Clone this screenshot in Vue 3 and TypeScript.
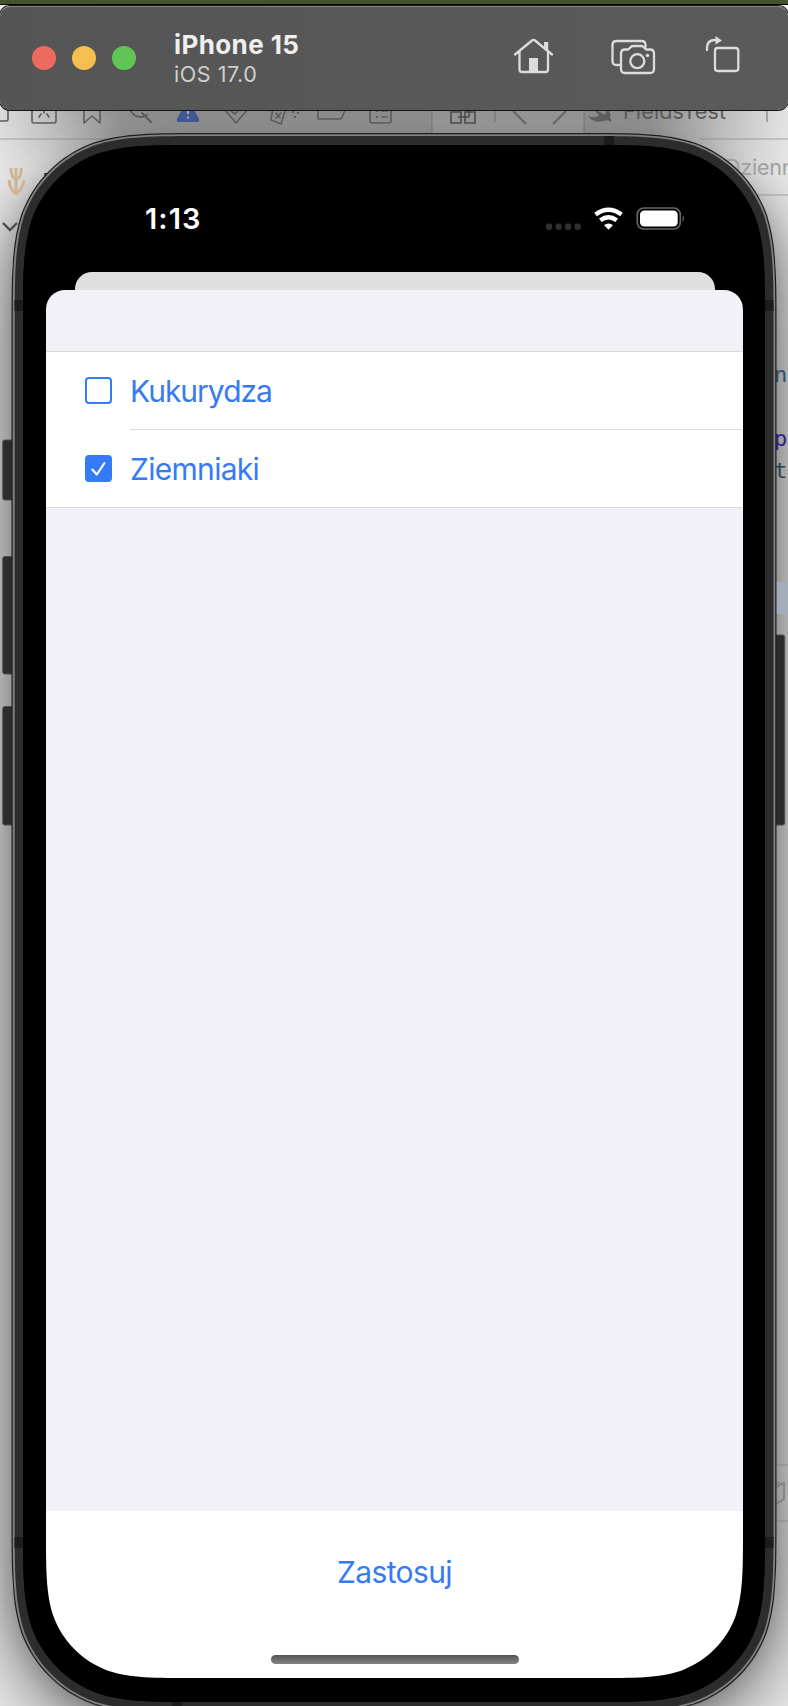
<script setup lang="ts">
import { ref } from 'vue'

interface Crop {
  id: number
  name: string
  checked: boolean
}

const crops = ref<Crop[]>([
  { id: 1, name: 'Kukurydza', checked: false },
  { id: 2, name: 'Ziemniaki', checked: true },
])

// Rounded rectangle with continuous-curvature corners.
function smoothRect(x: number, y: number, w: number, h: number, r: number): string {
  const k: [number, number][] = [
    [1.52866, 0], [1.08849, 0], [0.86841, 0], [0.63149, 0.07491],
    [0.37282, 0.16906], [0.16906, 0.37282], [0.07491, 0.63149],
    [0, 0.86841], [0, 1.08849], [0, 1.52866],
  ]
  const corner = (cx: number, cy: number, sx: number, sy: number, reverse: boolean) => {
    const pts = (reverse ? [...k].reverse() : k).map(
      ([a, b]) => `${(cx + sx * a * r).toFixed(2)} ${(cy + sy * b * r).toFixed(2)}`,
    )
    return `${pts[0]}C${pts.slice(1).join(' ')}`
  }
  return (
    'M' + corner(x + w, y, -1, 1, false) +
    'L' + corner(x + w, y + h, -1, -1, true) +
    'L' + corner(x, y + h, 1, -1, false) +
    'L' + corner(x, y, 1, 1, true) + 'Z'
  )
}

const outer = smoothRect(11.5, 133, 765, 1581, 129)
const rim = smoothRect(12.7, 134.2, 762.6, 1578.6, 128)
const frame = smoothRect(14.7, 136, 758.8, 1575, 126)
const bezel = smoothRect(23, 145, 742, 1557, 118)
const glass = smoothRect(46, 168, 697, 1510, 98)
</script>

<template>
  <main class="scene">
    <div class="glow"></div>
    <div class="toolbar-shade"></div>
    <svg class="layer" viewBox="0 0 788 1706" width="788" height="1706" aria-hidden="true">
      <g class="lines">
        <path d="M0 139H120M700 139H788M735 195H788M770 1465H788M770 1521H788" />
      </g>
      <path d="M432 108h152v26h-152z" fill="#fff" fill-opacity=".07" />
      <path d="M432 108V134M584 108V134" stroke="#555" stroke-opacity=".3" stroke-width="1.3" />
      <g fill="none" stroke="#5c5c5c" stroke-width="1.6" stroke-linecap="round" stroke-linejoin="round">
        <path d="M0 121h6q2 0 2-2V106M32 106v15q0 2 2 2h20q2 0 2-2v-15M44 106v7M39 117l2-3M49 117l-2-3" />
        <path d="M84 106v17l8-7 8 7v-17" />
        <path d="M129 107q4 11 13 10l5-2M142 113l9 9" stroke-width="2" />
        <path d="M224 109l12 14 12-14M231 111l4 3 7-7" />
        <path d="M273 107l-2 13 10 4 5-16M276 113l4 5M281 113l-5 5" />
        <path d="M318 106v13h22q2 0 3-4l2-5M370 106v15q0 2 2 2h17q2 0 2-2v-15M382 111h5M382 117h5" />
      </g>
      <path d="M292 112h2M297 113h2M294 117h2M376 111h2M376 117h2" stroke="#5c5c5c" stroke-width="2" />
      <path d="M177 119L184 106H192L199 119Q200 122 197 122H179Q176 122 177 119Z" fill="#3e5893" />
      <path d="M188 109v5M188 116.5v2" stroke="#aaa" stroke-width="2.2" />
      <path d="M451 112h10v11h-10zM465 112h10v11h-10zM458 117h11M469 117v-7" fill="none" stroke="#4b4b4b" stroke-width="1.6" />
      <path d="M495 109v13M767 109v13" stroke="#6c6c6c" />
      <path d="M513 111l13 13M566 111l-13 13" stroke="#666" stroke-width="2" />
      <path d="M588 116q7 3 11-1l-8-8 14 8q2-4 1-8 6 5 4 11 2 2 1 4-3-3-7-1-10 3-16-5Z" fill="#5d5d5d" />
      <text x="623" y="118.5" class="ide" font-size="21.5" fill="#5a5a5a" textLength="103">FieldsTest</text>
      <text x="725" y="175" class="ide" font-size="21.5" fill="#a0a0a0" textLength="86">Dziennik</text>
      <g fill="none" stroke="#cfb596" stroke-width="3">
        <path d="M16 195V168M11 168q0 9 4 11M21 168q1 9-4 11M9 180q1 9 6 13M24 180q-1 9-7 13" />
      </g>
      <text x="43" y="187" class="ide" font-size="19" font-weight="700" fill="#333">F</text>
      <path d="M3 223l7 7 7-7" fill="none" stroke="#4b4b4b" stroke-width="2.4" />
      <g class="code">
        <text x="774" y="382" fill="#2b4f6d">n</text>
        <text x="774" y="446" fill="#35208a">p</text>
        <text x="774" y="478" fill="#2b474b">t</text>
      </g>
      <path d="M776 582h12v32h-12z" fill="#a4acba" />
      <path d="M776 1487l8-4v16l-8 5M774 1485l6-3" fill="none" stroke="#808080" stroke-width="1.7" />

      <g fill="#2c2c2c" stroke="#4d4d4d" stroke-width="1">
        <rect x="2.8" y="440" width="13" height="60" rx="2" />
        <rect x="2.8" y="556.5" width="13" height="117.5" rx="2" />
        <rect x="2.8" y="706.5" width="13" height="118.5" rx="2" />
        <rect x="772" y="635" width="12.7" height="190" rx="2" />
      </g>
      <path :d="outer" fill="#1d1d1d" />
      <path :d="rim" fill="#808080" />
      <path :d="frame" fill="#2c2c2c" />
      <path d="M604 136h10v9h-10zM14.5 300h9v11h-9zM765 300h8.5v11h-8.5zM14.5 1537h9v11h-9zM765 1537h8.5v11h-8.5zM172 1701h10v6h-10z" fill="#1c1c1c" />
      <path :d="bezel" fill="#000" />
    </svg>

    <header class="toolbar">
      <div class="lights"><i class="red"></i><i class="amber"></i><i class="green"></i></div>
      <div class="device">
        <strong>iPhone 15</strong>
        <span>iOS 17.0</span>
      </div>
      <svg class="tools" viewBox="510 30 232 50" width="232" height="50" aria-hidden="true">
        <g fill="none" stroke="#dcdcdc" stroke-width="2.3" stroke-linecap="round" stroke-linejoin="round">
          <path d="M515 54.5l17-14q1.5-1.2 3 0l17 14M519.5 52v17.5q0 2.5 2.5 2.5h23.5q2.5 0 2.5-2.5V52" />
          <path d="M619 65h-2.500q-4 0-4-4V45q0-4 4-4h25q4 0 4 4v2" />
          <path d="M625 49.500h3.200l2.800-2.700q.8-.8 2-.8h8.200q1.200 0 2 .8l2.800 2.700h4q4 0 4 4v15.500q0 4-4 4h-25q-4 0-4-4V53.500q0-4 4-4z" />
          <circle cx="637.3" cy="61.2" r="7" />
          <rect x="715" y="48" width="23.3" height="23" rx="2.7" />
          <path d="M707 50v-2q0-8 8-8h2" />
        </g>
        <path d="M529 58h9v14h-9zM544 42h4.200v9l-4.200-3.500zM715.500 36l6.500 4.500-6.500 4z" fill="#dcdcdc" />
        <circle cx="647.5" cy="55.5" r="1.8" fill="#dcdcdc" />
      </svg>
    </header>

    <section class="screen">
      <div class="status">
        <time>1:13</time>
        <svg viewBox="540 200 150 34" width="150" height="34" aria-hidden="true">
          <g fill="#303030">
            <rect v-for="n in 4" :key="n" :x="536.5 + n * 9.5" y="223.5" width="6.2" height="6.4" rx="2.4" />
          </g>
          <g fill="none" stroke="#fff" stroke-width="4.4">
            <path d="M595.500 214.500q13-9.500 26 0" />
            <path d="M600.300 220.300q8.200-6 16.400 0" />
          </g>
          <path d="M604 225q4.500-3 9 0l-4.500 4.800z" fill="#fff" />
          <rect x="637.3" y="208" width="43" height="21" rx="6.5" fill="none" stroke="#666" stroke-width="1.7" />
          <rect x="640" y="210.6" width="37.7" height="16" rx="4.2" fill="#fff" />
          <path d="M682.700 215.500q2.500 3 0 6.500z" fill="#777" />
        </svg>
      </div>
      <div class="back-sheet"></div>
      <div class="sheet">
        <div class="list">
          <label v-for="crop in crops" :key="crop.id" class="row">
            <input v-model="crop.checked" type="checkbox" />
            <span class="box" :class="{ on: crop.checked }">
              <svg v-if="crop.checked" viewBox="0 0 27 27" width="27" height="27">
                <path d="M7.300 14.500l4.500 5L19.500 8" fill="none" stroke="#fff" stroke-width="2.1" stroke-linecap="round" stroke-linejoin="round" />
              </svg>
            </span>
            <span class="name">{{ crop.name }}</span>
          </label>
        </div>
        <footer class="footer">
          <button type="button">Zastosuj</button>
          <div class="home"></div>
        </footer>
      </div>
    </section>

    <svg class="layer" viewBox="0 0 788 1706" width="788" height="1706" aria-hidden="true">
      <path :d="bezel + glass" fill="#000" fill-rule="evenodd" />
    </svg>
  </main>
</template>

<style>
body {
  margin: 0;
}
</style>

<style scoped>
.scene {
  position: relative;
  box-sizing: border-box;
  width: 788px;
  height: 1706px;
  padding-top: 6px;
  overflow: hidden;
  background: #ececec;
  font-family: Inter, "Liberation Sans", sans-serif;
}
.glow {
  position: absolute;
  left: 12px;
  top: 134px;
  width: 764px;
  height: 1579px;
  border-radius: 140px;
  box-shadow: 0 24px 80px rgba(0, 0, 0, 0.6), 0 6px 30px rgba(0, 0, 0, 0.18);
}
.toolbar-shade {
  position: absolute;
  left: 0;
  right: 0;
  top: 108px;
  height: 64px;
  background: linear-gradient(rgba(0, 0, 0, 0.38), rgba(0, 0, 0, 0.28) 40%, transparent);
  mask-image: linear-gradient(90deg, rgba(0, 0, 0, 0.2), #000 120px, #000 650px, rgba(0, 0, 0, 0.1));
}
.layer {
  position: absolute;
  left: 0;
  top: 0;
  pointer-events: none;
}
.lines {
  fill: none;
  stroke: #777;
  stroke-opacity: 0.4;
  stroke-width: 1.5;
}
.ide {
  font-family: Inter, sans-serif;
}
.code {
  font: 22px "DejaVu Sans Mono", monospace;
}
.toolbar {
  position: relative;
  box-sizing: border-box;
  display: flex;
  height: 104px;
  padding-left: 32px;
  border-radius: 10px;
  background: linear-gradient(90deg, #555, #5a5a5a);
  border-top: 1px solid #858585;
  box-shadow: 0 0 0 1px #151515;
}
.toolbar::before {
  content: "";
  position: absolute;
  left: 0;
  right: 0;
  top: -7px;
  height: 4px;
  background: #445329;
  border-bottom: 1px solid #080808;
}
.lights {
  display: flex;
  gap: 16px;
  padding-top: 39px;
}
.lights i {
  width: 24px;
  height: 24px;
  border-radius: 50%;
}
.red { background: #ed6a5f; }
.amber { background: #f5bf4f; }
.green { background: #61c555; }
.device {
  display: flex;
  flex-direction: column;
  margin-left: 38px;
  padding-top: 22px;
  width: 150px;
  white-space: nowrap;
}
.device strong {
  color: #efefef;
  font-size: 26px;
  line-height: 32px;
  letter-spacing: 0.4px;
}
.device span {
  color: #cfcfcf;
  font-size: 21.5px;
  line-height: 26px;
  letter-spacing: 0.55px;
}
.tools {
  margin: 23px 46px 0 auto;
}
.screen {
  position: relative;
  display: flex;
  flex-direction: column;
  width: 697px;
  height: 1510px;
  margin: 58px 0 0 46px;
}
.status {
  display: flex;
  justify-content: space-between;
  box-sizing: border-box;
  height: 104px;
  padding: 32px 53px 0 99px;
}
.status time {
  color: #fff;
  font-size: 29px;
  font-weight: 600;
  line-height: 38px;
  letter-spacing: 1.1px;
}
.back-sheet {
  height: 17.5px;
  margin: 0 28.5px 0 29px;
  border-radius: 17px 17px 0 0;
  background: #dfdfdf;
}
.sheet {
  display: flex;
  flex: 1;
  flex-direction: column;
  justify-content: space-between;
  padding-top: 61.5px;
  border-radius: 19px 19px 85px 85px;
  background: #f2f1f7;
}
.list {
  background: #fff;
  border-top: 1px solid #d9d9dc;
  border-bottom: 1px solid #d9d9dc;
}
.row {
  position: relative;
  display: flex;
  align-items: center;
  height: 77px;
  padding-left: 39px;
}
.row + .row {
  height: 78px;
}
.row + .row::before {
  content: "";
  position: absolute;
  top: 0;
  left: 84px;
  right: 0;
  height: 1px;
  background: #dedee0;
}
.row input {
  position: absolute;
  opacity: 0;
}
.box {
  box-sizing: border-box;
  width: 27px;
  height: 27px;
  border: 2px solid #357af6;
  border-radius: 4px;
}
.box.on {
  border: 0;
  background: #357af6;
}
.box svg {
  display: block;
}
.name {
  margin-left: 18px;
  color: #357af6;
  font-size: 30px;
  line-height: 36px;
  letter-spacing: -1px;
}
.row + .row .name {
  padding-top: 1px;
  letter-spacing: -0.7px;
}
.footer {
  display: flex;
  flex-direction: column;
  align-items: center;
  justify-content: space-between;
  box-sizing: border-box;
  height: 167px;
  padding: 41px 0 14px;
  border-radius: 0 0 85px 85px;
  background: #fff;
}
.footer button {
  padding: 0;
  border: 0;
  background: none;
  color: #357af6;
  font: 30px/40px Inter, sans-serif;
  letter-spacing: -0.6px;
}
.home {
  width: 248px;
  height: 9px;
  border-radius: 5px;
  background: linear-gradient(#505352, #858585);
}
</style>
